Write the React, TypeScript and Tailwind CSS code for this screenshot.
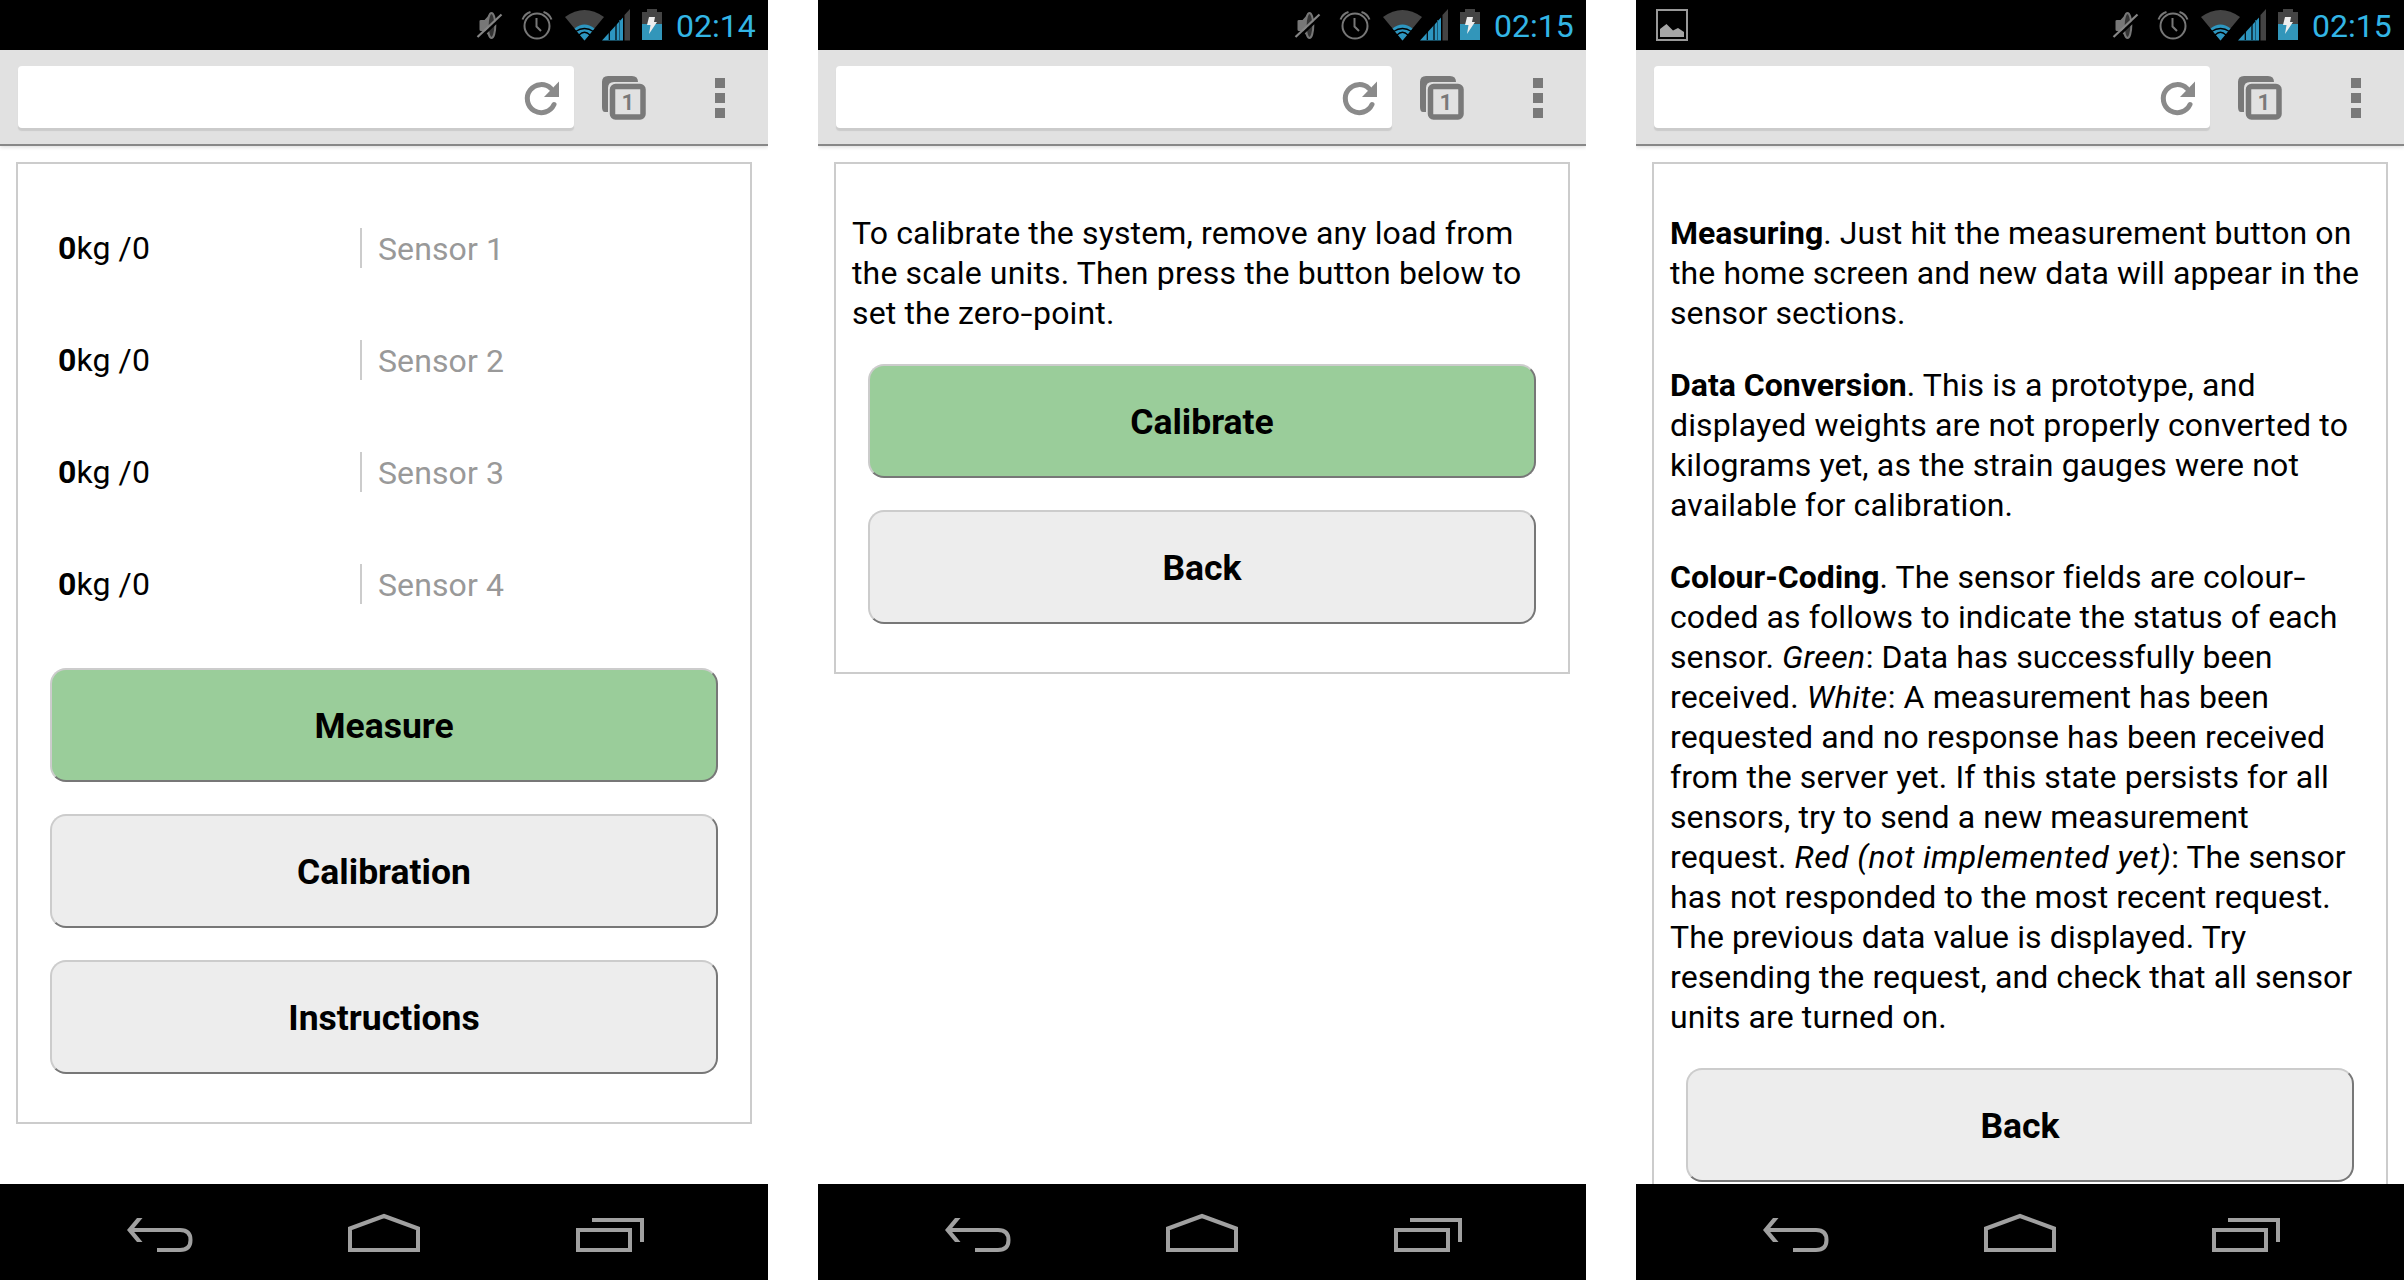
import React from "react";

function StatusIcons() {
  return (
    <svg width="196" height="50" viewBox="474 0 196 50" className="shrink-0">
      <path d="M479.500 21q0-1 1.500-1h3.500L490 14v23l-5.500-6H481q-1.500 0-1.500-1.500z" fill="#777" />
      <ellipse cx="491.500" cy="25.500" rx="3.800" ry="12.500" fill="#333" stroke="#777" strokeWidth="2" />
      <path d="M479.500 38.500L503.500 15.500" stroke="#000" strokeWidth="2.500" />
      <path d="M477.500 37L501.500 14.500" stroke="#858585" strokeWidth="2.200" />
      <g fill="none" stroke="#777">
        <circle cx="537" cy="26" r="12.500" strokeWidth="2" />
        <path d="M536.500 18v8.500l4.500 4.500" strokeWidth="2" />
        <path d="M522.500 19.500Q524.500 14 530.500 12M551.500 19.500Q549.500 14 543.500 12" strokeWidth="2" />
      </g>
      <path d="M565 17Q584.500 3 604 17L584.500 40.500z" fill="#444" />
      <path d="M574.500 28.500Q584.500 20.500 594.500 28.500L584.500 40.500z" fill="#2d96c0" />
      <path d="M575.500 31.500Q584.500 25.500 593.500 31.500M579 35Q584.500 29.500 590 35" fill="none" stroke="#000" strokeWidth="1.300" />
      <path d="M602 40.500L623 17.500v23z" fill="#2d96c0" />
      <path d="M624.500 40.500V15L630 9v31.500z" fill="#444" />
      <path d="M609.300 40V20M616 40V20" stroke="#000" strokeWidth="1.200" />
      <path d="M619.500 40V20" stroke="#1b5a74" strokeWidth="1" />
      <path d="M642 24V12h5V9h10v3h5v12z" fill="#444" />
      <path d="M642 24h20v16h-20z" fill="#3296ba" />
      <path d="M649 17h6l-1 5h3l-8 12l1.500-9H647z" fill="#eee" />
    </svg>
  );
}

function StatusBar({ time, picture }: { time: string; picture?: boolean }) {
  return (
    <div className="flex h-[50px] shrink-0 items-center bg-black pl-5 pr-3">
      {picture && (
        <svg width="32" height="32" viewBox="0 0 32 32">
          <rect x="1" y="1" width="30" height="30" fill="none" stroke="#999" strokeWidth="2" />
          <path d="M4 20l6.500-5l6.500 6.500l5-2.500l6 4v5H4z" fill="#a6a6a6" />
        </svg>
      )}
      <div className="ml-auto flex items-center">
        <StatusIcons />
        <span className="w-[86px] whitespace-nowrap pl-[6px] pt-px text-[32px] leading-[50px] text-[#33b5e5]">{time}</span>
      </div>
    </div>
  );
}

function Toolbar() {
  return (
    <div className="z-10 flex h-24 shrink-0 items-start border-b-2 border-[#888] bg-[#e1e1e1] pl-[18px] pt-4 shadow-[0_1px_4px_rgba(0,0,0,0.15)]">
      <div className="flex h-[62px] w-[556px] items-center justify-end rounded-[4px] bg-white shadow-[0_3px_1px_#cbcbcb]">
        <svg width="52" height="62" viewBox="522 66 52 62">
          <path d="M554 104.500A14 14 0 1 1 551 88.500" fill="none" stroke="#8a8a8a" strokeWidth="5" strokeLinecap="round" />
          <path d="M559 81.500V97h-15z" fill="#8a8a8a" />
        </svg>
      </div>
      <svg width="194" height="62" viewBox="574 66 194 62">
        <path d="M605 112Q602 112 602 107V82Q602 76 608 76H632Q638 76 638 82H614Q608 82 608 88V112z" fill="#797979" />
        <rect x="612.500" y="86.500" width="30.500" height="30.500" rx="3" fill="#e1e1e1" stroke="#797979" strokeWidth="5.500" />
        <path d="M715 78h10v10h-10zM715 93h10v10h-10zM715 108h10v10h-10z" fill="#797979" />
        <text x="621.500" y="110" fontSize="22.500" fontWeight="600" fill="#797979">1</text>
      </svg>
    </div>
  );
}

function NavBar() {
  return (
    <div className="z-10 h-24 shrink-0 bg-black">
      <svg width="768" height="96" viewBox="0 1184 768 96" fill="none" stroke="#a0a0a0" strokeWidth="4">
        <path d="M137 1218h5.500l-10 12l10 12H137l-10-12z" fill="#a0a0a0" stroke="none" />
        <path d="M130 1230H180Q190.500 1230 190.500 1240Q190.500 1250 180 1250H157" />
        <path d="M350 1250V1228.500L384 1216L418 1228.500V1250z" />
        <path d="M578 1230h52v20h-52zM592 1220h50v22" />
      </svg>
    </div>
  );
}

function Phone({ time, picture, children }: { time: string; picture?: boolean; children: React.ReactNode }) {
  return (
    <div className="flex h-[1280px] w-[768px] shrink-0 flex-col overflow-hidden bg-white">
      <StatusBar time={time} picture={picture} />
      <Toolbar />
      <main className="min-h-0 flex-1 overflow-hidden px-4 pt-4">{children}</main>
      <NavBar />
    </div>
  );
}

function Button({ children, green }: { children: string; green?: boolean }) {
  return (
    <button
      className={`mx-4 block h-[114px] rounded-2xl border-2 border-b-[#777] border-l-[#ccc] border-r-[#777] border-t-[#ccc] pt-0.5 text-[35.5px] font-bold text-black ${
        green ? "bg-[#9acd9a]" : "bg-[#ededed]"
      }`}
    >
      {children}
    </button>
  );
}

function Line({ children }: { children: React.ReactNode }) {
  return <span className="block whitespace-nowrap">{children}</span>;
}

function Dash() {
  return <span className="mx-[2px] inline-block scale-x-[1.35]">-</span>;
}

function Em({ children }: { children: React.ReactNode }) {
  return <i className="tracking-[0.45px]">{children}</i>;
}

const card = "flex flex-col gap-8 border-2 border-[#ccc] px-4";

export default function App() {
  return (
    <div className="flex h-[1280px] w-[2404px] gap-[50px] overflow-hidden bg-white font-['Roboto',sans-serif] text-[32px] leading-10 text-black">
      <Phone time="02:14">
        <section className={`${card} pb-12 pt-[65px]`}>
          <div className="mb-[31px] flex flex-col gap-[72px] tracking-[0.1px]">
            {[1, 2, 3, 4].map((n) => (
              <div key={n} className="-mt-px mb-px flex pl-6">
                <div className="w-[302px] pt-px leading-[39px]">
                  <b>0</b>kg /0
                </div>
                <div className="h-10 border-l-2 border-[#ccc] pl-4 leading-[42px] text-[#999]">Sensor {n}</div>
              </div>
            ))}
          </div>
          <Button green>Measure</Button>
          <Button>Calibration</Button>
          <Button>Instructions</Button>
        </section>
      </Phone>

      <Phone time="02:15">
        <section className={`${card} pb-12 pt-[49px]`}>
          <p className="-mb-px tracking-[0.15px]">
            <Line>To calibrate the system, remove any load from</Line>
            <Line>the scale units. Then press the button below to</Line>
            <Line>set the zero<Dash />point.</Line>
          </p>
          <Button green>Calibrate</Button>
          <Button>Back</Button>
        </section>
      </Phone>

      <Phone time="02:15" picture>
        <section className={`${card} pb-12 pt-[49px]`}>
          <p className="tracking-[0.1px]">
            <Line><b className="tracking-normal">Measuring</b>. Just hit the measurement button on</Line>
            <Line>the home screen and new data will appear in the</Line>
            <Line>sensor sections.</Line>
          </p>
          <p className="tracking-[0.14px]">
            <Line><b className="tracking-normal">Data Conversion</b>. This is a prototype, and</Line>
            <Line>displayed weights are not properly converted to</Line>
            <Line>kilograms yet, as the strain gauges were not</Line>
            <Line>available for calibration.</Line>
          </p>
          <p className="-mb-px tracking-[0.1px]">
            <Line><b className="tracking-normal">Colour-Coding</b>. The sensor fields are colour<Dash /></Line>
            <Line>coded as follows to indicate the status of each</Line>
            <Line>sensor. <Em>Green</Em>: Data has successfully been</Line>
            <Line>received. <Em>White</Em>: A measurement has been</Line>
            <Line>requested and no response has been received</Line>
            <Line>from the server yet. If this state persists for all</Line>
            <Line>sensors, try to send a new measurement</Line>
            <Line>request. <Em>Red (not implemented yet)</Em>: The sensor</Line>
            <Line>has not responded to the most recent request.</Line>
            <Line>The previous data value is displayed. Try</Line>
            <Line>resending the request, and check that all sensor</Line>
            <Line>units are turned on.</Line>
          </p>
          <Button>Back</Button>
        </section>
      </Phone>
    </div>
  );
}
